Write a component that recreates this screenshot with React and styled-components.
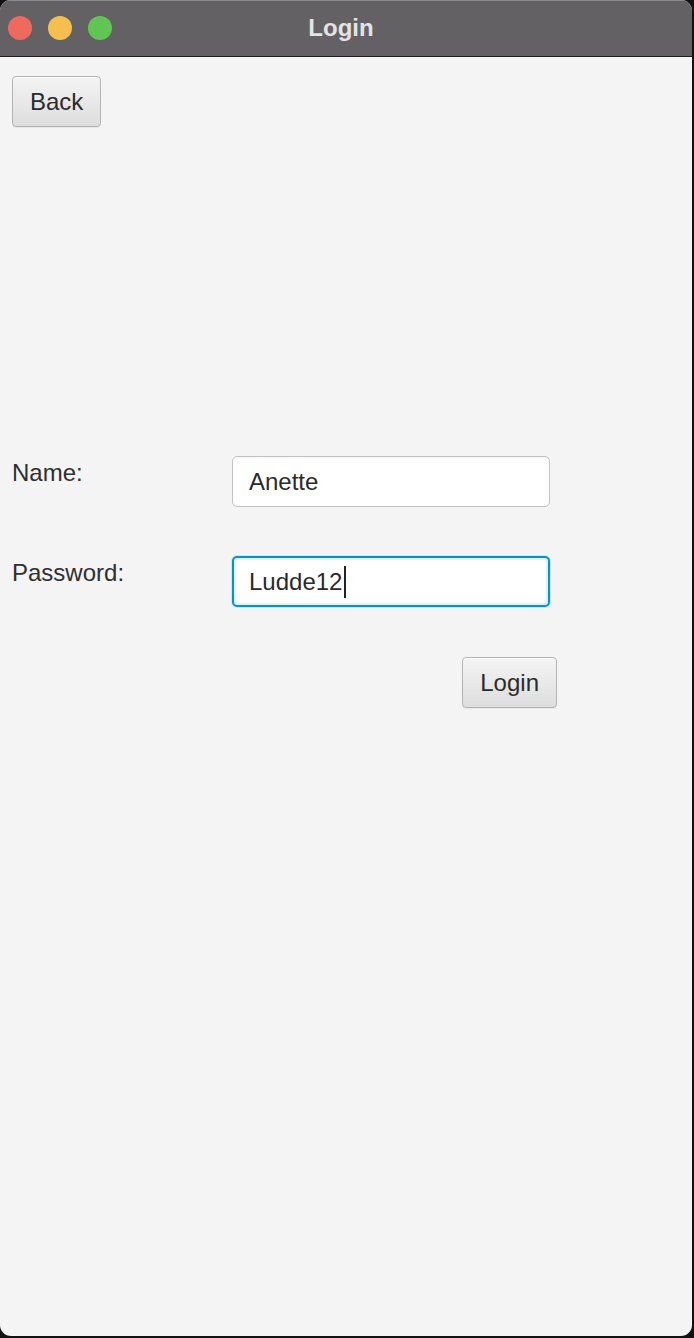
import React, { useState } from 'react'
import styled, { createGlobalStyle } from 'styled-components'

const GlobalStyle = createGlobalStyle`
  html, body {
    margin: 0;
    padding: 0;
    background: #121212;
  }
  body {
    font-family: 'Liberation Sans', Arial, sans-serif;
  }
`

export default function App() {
  const [name, setName] = useState('Anette')
  const [password, setPassword] = useState('Ludde12')

  return (
    <>
      <GlobalStyle />
      <Screen>
        <Window>
          <TitleBar>
            <Lights>
              <Light color='#ee6a5f' />
              <Light color='#f5bf4f' />
              <Light color='#61c554' />
            </Lights>
            <Title>Login</Title>
          </TitleBar>
          <Body>
            <TopRow>
              <Button>Back</Button>
            </TopRow>
            <Form>
              <Label>Name:</Label>
              <Input value={name} onChange={e => setName(e.target.value)} />
              <Label>Password:</Label>
              <FocusWrap>
                <Input focused value={password} onChange={e => setPassword(e.target.value)} />
                <Caret />
              </FocusWrap>
              <Actions>
                <Button>Login</Button>
              </Actions>
            </Form>
          </Body>
        </Window>
      </Screen>
    </>
  )
}

const Screen = styled.div`
  width: 694px;
  height: 1338px;
  background: #121212;
`
const Window = styled.div`
  width: 692px;
  height: 1336px;
  display: flex;
  flex-direction: column;
  border-radius: 11px;
  overflow: hidden;
  background: #f4f4f4;
`
const TitleBar = styled.div`
  height: 57px;
  box-sizing: border-box;
  position: relative;
  display: flex;
  align-items: center;
  justify-content: center;
  background: #636164;
  border-top: 1px solid #8c8a8d;
  border-bottom: 1px solid #1e1e1e;
`
const Lights = styled.div`
  position: absolute;
  left: 8px;
  top: 15px;
  display: flex;
  gap: 16px;
`
const Light = styled.span`
  width: 24px;
  height: 24px;
  border-radius: 50%;
  background: ${p => p.color};
`
const Title = styled.div`
  color: #e4e3e4;
  font-family: 'Liberation Sans', Arial, sans-serif;
  font-weight: 700;
  font-size: 24px;
  margin: -2px 0 0 -10px;
`
const Body = styled.div`
  flex: 1;
  padding: 19px 12px 0;
  display: flex;
  flex-direction: column;
`
const TopRow = styled.div`
  display: flex;
`
const Button = styled.button`
  height: 51px;
  padding: 0 17px;
  font-family: 'Liberation Sans', Arial, sans-serif;
  font-size: 24px;
  color: #2b2b2b;
  border: 1px solid #b3b3b3;
  border-radius: 4px;
  background: linear-gradient(#f4f4f4, #dddddd);
  box-shadow: inset 0 1px 0 #ffffff, 0 1px 0 rgba(0,0,0,0.05);
  cursor: pointer;
`
const Form = styled.div`
  margin-top: 329px;
  display: grid;
  grid-template-columns: 220px 325px;
  row-gap: 49px;
`
const Label = styled.div`
  align-self: start;
  padding-top: 3px;
  font-size: 24px;
  color: #2f2f2f;
`
const FocusWrap = styled.div`
  position: relative;
  width: 318px;
`
const Input = styled.input`
  box-sizing: border-box;
  width: 318px;
  height: 51px;
  padding: 0 16px;
  font-family: 'Liberation Sans', Arial, sans-serif;
  font-size: 24px;
  color: #2a2a2a;
  background: #ffffff;
  outline: none;
  border-radius: 5px;
  border: ${p => p.focused ? '2px solid #0095cb' : '1px solid #c3c3c3'};
  padding-left: ${p => p.focused ? '15px' : '16px'};
  box-shadow: ${p => p.focused
    ? 'inset 0 0 0 2px #dff0f8, 0 0 0 1px #cde6f1'
    : 'inset 0 1px 2px rgba(0,0,0,0.06)'};
`
const Caret = styled.span`
  position: absolute;
  left: 112px;
  top: 10px;
  width: 2px;
  height: 32px;
  background: #222;
`
const Actions = styled.div`
  grid-column: 2;
  display: flex;
  justify-content: flex-end;
  margin-top: 1px;
`
